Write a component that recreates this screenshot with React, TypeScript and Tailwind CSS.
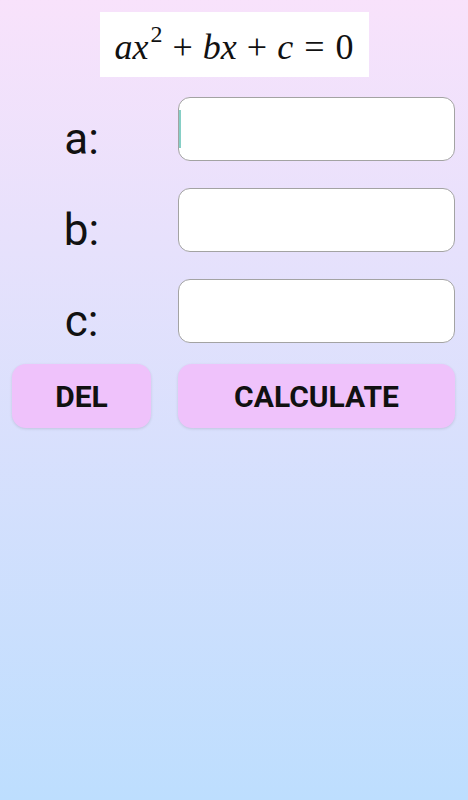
import React, { useState } from 'react'

const rows = ['a', 'b', 'c']

export default function App() {
  const [vals, setVals] = useState<Record<string, string>>({ a: '', b: '', c: '' })

  return (
    <div className="min-h-[800px] w-full bg-linear-to-b from-[#f8e2fb] to-[#bddefe] px-[12px] pt-[12px] font-['Roboto',sans-serif] text-[#111]">
      <div className="flex justify-center">
        <div className="flex h-[65px] w-[269px] items-center justify-center bg-white pt-[4px] font-['Liberation_Serif',serif] text-[36px] text-[#111] leading-none">
          <span className="italic">ax</span>
          <span className="relative -top-[13px] ml-[2px] text-[24px]">2</span>
          <span className="mx-[10px]">+</span>
          <span className="italic">bx</span>
          <span className="mx-[10px]">+</span>
          <span className="italic">c</span>
          <span className="mx-[11px]">=</span>
          <span>0</span>
        </div>
      </div>

      <div className="mt-[20px] flex flex-col gap-[27px]">
        {rows.map((r, i) => (
          <div key={r} className="grid grid-cols-[139px_277px] gap-x-[27px]">
            <div className="mt-[20px] text-center text-[44px] leading-[44px]">{r}:</div>
            <div className="relative">
              <input
                value={vals[r]}
                onChange={(e) => setVals({ ...vals, [r]: e.target.value })}
                className="h-[64px] w-full rounded-[12px] border border-[#a3a3a3] bg-white px-3 text-[24px] outline-none"
              />
              {i === 0 && <span className="absolute left-[1px] top-[13px] h-[38px] w-[2px] bg-[#86cfc6]" />}
            </div>
          </div>
        ))}
      </div>

      <div className="mt-[21px] grid grid-cols-[139px_277px] gap-x-[27px]">
        <button
          onClick={() => setVals({ a: '', b: '', c: '' })}
          className="h-[64px] rounded-[14px] bg-[#efc2fb] text-[30px] font-bold shadow-[0_1px_3px_rgba(0,0,0,0.12)]"
        >
          DEL
        </button>
        <button className="h-[64px] rounded-[14px] bg-[#efc2fb] text-[30px] font-bold shadow-[0_1px_3px_rgba(0,0,0,0.12)]">
          CALCULATE
        </button>
      </div>
    </div>
  )
}
